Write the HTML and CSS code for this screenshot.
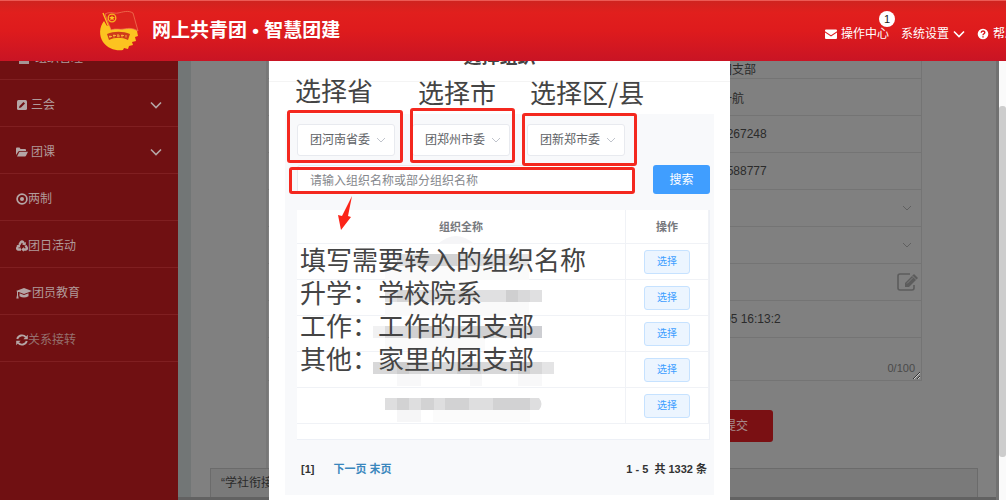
FILE: index.html
```html
<!DOCTYPE html>
<html lang="zh-CN">
<head>
  <meta charset="utf-8">
  <title>网上共青团 • 智慧团建</title>
  <link rel="stylesheet" href="styles.css">
</head>
<body>
  <header class="topbar">
    <a class="brand" href="#">
      <svg class="brand-logo" viewBox="0 0 40 42" aria-hidden="true">
        <path d="M5 11C0 17 0 26 4 32c5 7 13 9 20 8l1-2 4 1 1-3 4-1-1-3 4-1-1-4 3-1-1-5-2-5-28 0z" fill="#fcc320"/>
        <path d="M6 4c6-3 9 0 13-1 5-1 10-3 15 0l5 18c-5-3-9-3-14-2-5 1-8-1-13 1z" fill="#dc231e" stroke="#f0805a" stroke-width="0.7"/>
        <path d="M4 3l7 17" stroke="#fcc320" stroke-width="1.300"/>
        <circle cx="13" cy="8" r="3.800" fill="none" stroke="#f8b420" stroke-width="1.300"/>
        <path d="M13 5.200l.8 1.900h2l-1.500 1.300.5 2-1.800-1.100-1.800 1.100.5-2-1.500-1.300h2z" fill="#fcc320"/>
        <path d="M8 24c7-3 16-3 23 0l-2 6c-6-3-13-3-19 0z" fill="#cf3a1a"/>
        <path d="M11 25.500v2.500m-1-1.500h3m2-2v3m-1-2h3m2-1.500v3m-1-1h3m2-1.500v3m-1-2h3m2-.5v2.500" stroke="#fcb83a" stroke-width="0.900" fill="none"/>
      </svg>
      <span>网上共青团 • 智慧团建</span>
    </a>
    <nav class="topnav">
      <a class="topnav-link topnav-mail" href="#">
        <svg class="ico" viewBox="0 0 12 12"><path d="M0 2.500Q0 1.500 1 1.500h10q1 0 1 1v.7L6 7.200 0 3.200zM0 4.500l6 4 6-4v5.500q0 1-1 1H1q-1 0-1-1z" fill="#fff"/></svg>
        操作中心
        <span class="badge">1</span>
      </a>
      <a class="topnav-link" href="#">
        系统设置
        <svg class="ico" viewBox="0 0 12 12"><path d="M1 3.500l5 5 5-5" fill="none" stroke="#fff" stroke-width="1.600"/></svg>
      </a>
      <a class="topnav-link" href="#">
        <svg class="ico" viewBox="0 0 12 12"><circle cx="6" cy="6" r="5.300" fill="#fff"/><path d="M4.200 4.700C4.200 2.400 7.800 2.400 7.800 4.600 7.800 5.800 6 5.800 6 7.200M6 8.200v1.300" fill="none" stroke="#d8181d" stroke-width="1.400"/></svg>
        帮助
      </a>
    </nav>
  </header>

  <div class="layout">
    <nav class="sidebar">
      <a class="side-item" href="#">
        <svg class="side-icon side-icon-wide" viewBox="0 0 16 12"><path d="M3 2h10v10H3z" fill="#a59595"/></svg>
        <span class="side-text">组织管理</span>
      </a>
      <a class="side-item" href="#">
        <svg class="side-icon" viewBox="0 0 12 12"><rect x="1" y="1" width="10" height="10" rx="1.500" fill="#b5a6a6"/><path d="M3 9l.5-2L7.500 3 9 4.500 5 8.500z" fill="#701012"/></svg>
        <span class="side-text">三会</span>
        <svg class="side-arrow" viewBox="0 0 12 12"><path d="M1 3.500l5 5 5-5"/></svg>
      </a>
      <a class="side-item" href="#">
        <svg class="side-icon" viewBox="0 0 12 12"><path d="M0 9V2.500Q0 1.500 1 1.500h2.500l1 1.500H9q1 0 1 1v1H3.500Q2.500 5 2 6zM1 10.500L3 6.500q.3-.7 1-.7h8l-2 4q-.3.700-1 .7z" fill="#b5a6a6"/></svg>
        <span class="side-text">团课</span>
        <svg class="side-arrow" viewBox="0 0 12 12"><path d="M1 3.500l5 5 5-5"/></svg>
      </a>
      <a class="side-item side-plain" href="#">
        <svg class="side-icon" viewBox="0 0 12 12"><circle cx="6" cy="6" r="4.900" fill="none" stroke="#b5a6a6" stroke-width="1.700"/><circle cx="6" cy="6" r="2" fill="#b5a6a6"/></svg>
        <span class="side-text">两制</span>
      </a>
      <a class="side-item side-plain" href="#">
        <svg class="side-icon" viewBox="0 0 12 12"><g fill="none" stroke="#b5a6a6" stroke-width="2.300"><path d="M3.300 4.800L5 2q1-1.300 2 0l1 1.800"/><path d="M9.500 5.500l1.200 2q.7 1.800-1 2H7"/><path d="M5 9.500H2.200q-1.600-.3-.8-2l1-1.600"/></g><path d="M6 4.600l3.600.9L10 2zM7.800 7v4.800L5.200 9.500zM.4 5.500l3.400-.9.600 3.400z" fill="#b5a6a6"/></svg>
        <span class="side-text">团日活动</span>
      </a>
      <a class="side-item side-plain" href="#">
        <svg class="side-icon side-icon-wide" viewBox="0 0 16 12"><path d="M8 1l8 3-8 3-8-3zM3.500 6.200L8 8l4.500-1.800v3Q8 12 3.500 9.200zM1 4.500h1V8l.7 3.500H.3L1 8z" fill="#b5a6a6"/></svg>
        <span class="side-text">团员教育</span>
      </a>
      <a class="side-item side-plain side-active" href="#">
        <svg class="side-icon" viewBox="0 0 12 12"><g fill="none" stroke="#b5a6a6" stroke-width="1.900"><path d="M1.200 5A5 5 0 0 1 9.800 3.200"/><path d="M10.800 7A5 5 0 0 1 2.200 8.800"/></g><path d="M11.800.800v4.400H7.400zM.2 11.200V6.800h4.400z" fill="#b5a6a6"/></svg>
        <span class="side-text">关系接转</span>
      </a>
    </nav>

    <main class="content">
      <form class="transfer-form">
        <div class="field field-org"><input type="text" value="团支部" aria-label="团支部"></div>
        <div class="field"><input type="text" value="一航" aria-label="姓名"></div>
        <div class="field"><input type="text" value="0267248" aria-label="证件号"></div>
        <div class="field"><input type="text" value="0588777" aria-label="手机号"></div>
        <div class="field">
          <select aria-label="转接原因"><option></option></select>
          <svg class="field-icon" viewBox="0 0 12 12"><path d="M2 4l4 4 4-4"/></svg>
        </div>
        <div class="field">
          <select aria-label="转出类型"><option></option></select>
          <svg class="field-icon" viewBox="0 0 12 12"><path d="M2 4l4 4 4-4"/></svg>
        </div>
        <div class="field">
          <input type="text" aria-label="转入组织">
          <svg class="field-edit" viewBox="0 0 24 20"><path d="M14 2H4Q2 2 2 4v12q0 2 2 2h12q2 0 2-2v-3" fill="none" stroke="#5c5c5c" stroke-width="1.600"/><path d="M9 11L18 2l4 4-9 9H9z" fill="#5c5c5c"/><path d="M16.500 4l4 4M11 11.500l6-6" stroke="#808080" stroke-width="0.900"/></svg>
        </div>
        <div class="field"><input type="text" value="-05 16:13:2" aria-label="时间"></div>
        <div class="field field-note">
          <textarea aria-label="备注"></textarea>
          <span class="counter">0/100</span>
        </div>
        <button class="submit" type="button">提交</button>
      </form>
      <div class="notice">“学社衔接</div>
      <div class="hscroll"></div>
    </main>
    <div class="vscroll"><div class="vscroll-thumb"></div></div>
  </div>

  <div class="dialog-layer">
    <section class="dialog" role="dialog" aria-label="选择组织">
      <h2 class="dialog-title">选择组织</h2>
      <div class="dialog-body">
        <div class="org-selects">
          <label class="org-select">
            <select aria-label="省"><option>团河南省委</option></select>
            <svg viewBox="0 0 12 12"><path d="M2 4l4 4 4-4"/></svg>
          </label>
          <label class="org-select">
            <select aria-label="市"><option>团郑州市委</option></select>
            <svg viewBox="0 0 12 12"><path d="M2 4l4 4 4-4"/></svg>
          </label>
          <label class="org-select">
            <select aria-label="区/县"><option>团新郑市委</option></select>
            <svg viewBox="0 0 12 12"><path d="M2 4l4 4 4-4"/></svg>
          </label>
        </div>
        <div class="search-row">
          <input type="text" placeholder="请输入组织名称或部分组织名称" aria-label="组织名称">
          <button type="button">搜索</button>
        </div>
        <div class="table-box">
          <table class="org-table">
            <thead>
              <tr><th scope="col">组织全称</th><th scope="col" class="col-action">操作</th></tr>
            </thead>
            <tbody>
              <tr>
                <td><svg class="mosaic" viewBox="0 0 182 36"><path d="M65 0q18-16 36 0z" fill="#f5f5f7"/><path d="M24 10h24v12H24z" fill="#dededf"/><path d="M48 10h36v12H48z" fill="#d2d2d3"/><path d="M84 10h48v12H84z" fill="#dededf"/><path d="M132 10h24v12h-24z" fill="#e4e4e5"/><path d="M12 22h144v14H12z" fill="#fafafa"/></svg></td>
                <td><button type="button">选择</button></td>
              </tr>
              <tr>
                <td><svg class="mosaic" viewBox="0 0 182 36"><path d="M12 10h157v12H12z" fill="#e0e0e1"/><path d="M24 10h12v12H24zM72 10h24v12H72z" fill="#d6d6d7"/><path d="M133 10h12v12h-12z" fill="#cfcfd0"/><path d="M145 10h12v12h-12z" fill="#d9d9da"/><path d="M12 22h144v14H12z" fill="#fafafa"/></svg></td>
                <td><button type="button">选择</button></td>
              </tr>
              <tr>
                <td><svg class="mosaic" viewBox="0 0 182 36"><path d="M0 10h12v12H0z" fill="#f1f1f2"/><path d="M12 10h157v12H12z" fill="#dcdcdd"/><path d="M36 10h24v12H36zM97 10h24v12H97z" fill="#d0d0d1"/><path d="M157 10h12v12h-12z" fill="#cdced2"/><path d="M12 22h100v12H12z" fill="#fafafa"/></svg></td>
                <td><button type="button">选择</button></td>
              </tr>
              <tr>
                <td><svg class="mosaic" viewBox="0 0 182 36"><path d="M0 10h181v12H0z" fill="#d8d8d9"/><path d="M24 10h12v12H24zM84 10h24v12H84zM145 10h12v12h-12z" fill="#cdcdce"/><path d="M169 10h12v12h-12z" fill="#e4e4e5"/><path d="M24 22h24v12H24zM97 22h12v12H97zM145 22h24v12h-24z" fill="#f8f8f9"/></svg></td>
                <td><button type="button">选择</button></td>
              </tr>
              <tr>
                <td><svg class="mosaic" viewBox="0 0 182 36"><path d="M12 10h154q5 6 0 12H12z" fill="#dededf"/><path d="M24 10h12v12H24zM48 10h13v12H48zM72 10h24v12H72zM120 10h37v12h-37z" fill="#d2d2d3"/><path d="M24 22h24v12H24z" fill="#f6f6f7"/><path d="M60 22h97v12H60z" fill="#fbfbfb"/></svg></td>
                <td><button type="button">选择</button></td>
              </tr>
            </tbody>
          </table>
        </div>
        <div class="pager">
          <span>[1]</span>
          <span class="pager-links"><a href="#">下一页</a> <a href="#">末页</a></span>
          <span class="pager-total">1 - 5&nbsp; 共 1332 条</span>
        </div>
      </div>

      <!-- 操作说明标注 -->
      <div class="mark mark-province"></div>
      <div class="mark mark-city"></div>
      <div class="mark mark-county"></div>
      <div class="mark mark-name"></div>
      <svg class="arrow" viewBox="0 0 16 36"><path d="M14 1L10 21l3 1L3 35 0 20l4 1z" fill="#fb2418"/></svg>
      <p class="tip tip-province">选择省</p>
      <p class="tip tip-city">选择市</p>
      <p class="tip tip-county">选择区/县</p>
      <p class="tip tip-name">填写需要转入的组织名称<br>升学：学校院系<br>工作：工作的团支部<br>其他：家里的团支部</p>
    </section>
  </div>
</body>
</html>
```
FILE: styles.css
```css
* {
  box-sizing: border-box;
}
body {
  margin: 0;
  height: 100vh;
  display: flex;
  flex-direction: column;
  position: relative;
  overflow: hidden;
  background: #808080;
  color: #333;
  font: 12px/16px "Liberation Sans", "Noto Sans CJK SC", sans-serif;
}
a {
  color: inherit;
  text-decoration: none;
}
button, input, select, textarea {
  font: inherit;
  color: inherit;
  margin: 0;
}
select {
  appearance: none;
}

/* header */
.topbar {
  position: relative;
  z-index: 3;
  flex: none;
  height: 61px;
  display: flex;
  align-items: center;
  justify-content: space-between;
  padding-left: 99px;
  border-top: 1px solid #ec5a55;
  background: linear-gradient(#cf2420, #e11f1d 20%, #de1b1d 50%, #c91424);
  color: #fff;
}
.brand {
  display: flex;
  align-items: center;
  gap: 13px;
  font-size: 19px;
  line-height: 28px;
  font-weight: bold;
  white-space: nowrap;
}
.brand-logo {
  width: 40px;
  height: 42px;
}
.topnav {
  display: flex;
  align-items: center;
  gap: 12px;
  width: 181px;
  padding-top: 6px;
  white-space: nowrap;
}
.topnav-link {
  position: relative;
  flex: none;
  display: flex;
  align-items: center;
  gap: 4px;
}
.badge {
  position: absolute;
  right: -6px;
  top: -15px;
  width: 16px;
  height: 16px;
  border-radius: 50%;
  background: #fff;
  color: #222;
  font-size: 11px;
  text-align: center;
}
.ico {
  width: 12px;
  height: 12px;
}

/* page behind the dialog */
.layout {
  flex: 1;
  min-height: 0;
  display: flex;
  overflow: hidden;
}
.sidebar {
  flex: none;
  width: 178px;
  margin-top: -28px;
  background: #701012;
}
.side-item {
  display: flex;
  align-items: center;
  gap: 3px;
  height: 47px;
  padding: 3px 16px 0;
  border-bottom: 1px solid #801f21;
  color: #b09a9a;
}
.side-plain {
  gap: 0;
}
.side-active {
  color: #95706f;
}
.side-icon {
  width: 12px;
  height: 12px;
}
.side-icon-wide {
  width: 16px;
}
.side-text {
  flex: 1;
}
.side-arrow {
  width: 12px;
  height: 12px;
  fill: none;
  stroke: #b5a6a6;
  stroke-width: 1.6;
}
.content {
  flex: 1;
  min-width: 0;
  display: flex;
  flex-direction: column;
  border-left: 13px solid #727676;
  border-right: 3px solid #717171;
  background: #808080;
}
.transfer-form {
  margin: -19px 74px 0 75px;
  border-left: 2px solid #777;
}
.field {
  position: relative;
  height: 37px;
  border: 1px solid #747474;
  border-width: 0 1px 1px 0;
}
.field input, .field select, .field textarea {
  display: block;
  width: 100%;
  height: 100%;
  padding: 0 0 0 452px;
  border: 0;
  background: none;
  color: #2b2b2b;
}
.field.field-org input {
  padding-top: 16px;
}
.field-icon {
  position: absolute;
  right: 8px;
  top: 12px;
  width: 12px;
  height: 12px;
  fill: none;
  stroke: #606060;
}
.field-edit {
  position: absolute;
  right: 1px;
  top: 8px;
  width: 24px;
  height: 20px;
}
.field.field-note {
  height: 43px;
}
.counter {
  position: absolute;
  right: 6px;
  bottom: 4px;
  font-size: 11px;
  color: #4a4a4a;
}
.submit {
  display: block;
  width: 74px;
  height: 32px;
  margin: 29px 0 26px 431px;
  border: 0;
  border-radius: 3px;
  background: #7a1013;
  color: #a58a8a;
}
.notice {
  flex: 1;
  margin: 0 18px 0 19px;
  padding: 6px 10px;
  border: 1px solid #6b6b6b;
  border-bottom: 0;
  background: #7a7a7a;
  color: #2b2b2b;
}
.hscroll {
  flex: none;
  height: 6px;
  margin-left: -13px;
  background: #626262;
}
.vscroll {
  flex: none;
  width: 7px;
  padding-top: 45px;
  background: #fafafa;
}
.vscroll-thumb {
  height: 89%;
  max-height: 351px;
  border-radius: 3px;
  background: #cdcdcd;
}

/* dialog */
.dialog-layer {
  position: absolute;
  inset: 0 7px 0 0;
  z-index: 2;
  display: flex;
  justify-content: center;
}
.dialog {
  position: relative;
  width: 461px;
  padding: 0 16px;
  background: #fff;
}
.dialog-title {
  margin: 0 -16px 32px;
  padding: 43px 0 10px;
  border-bottom: 1px solid #f4f4f4;
  color: #444;
  font-size: 18px;
  line-height: 28px;
  text-align: center;
}
.dialog-body {
  padding: 10px 4px 0 12px;
  height: 381px;
  background: #f8f9fb;
}
.org-selects {
  display: flex;
  gap: 17px;
}
.org-select {
  position: relative;
  width: 98px;
}
.org-select select {
  display: block;
  width: 100%;
  height: 32px;
  padding: 0 12px;
  border: 1px solid #e8eaef;
  border-radius: 3px;
  background: #fff;
  color: #606266;
}
.org-select svg {
  position: absolute;
  right: 8px;
  top: 10px;
  width: 12px;
  height: 12px;
  fill: none;
  stroke: #c0c4cc;
}
.search-row {
  display: flex;
  gap: 20px;
  margin: 9px 0 16px;
}
.search-row input {
  flex: 1;
  min-width: 0;
  height: 29px;
  padding: 2px 12px 0;
  border: 1px solid #e8eaef;
  border-radius: 3px;
  background: #fff;
}
.search-row input::placeholder {
  color: #85878c;
}
.search-row button {
  width: 57px;
  border: 0;
  border-radius: 3px;
  background: #409eff;
  color: #fff;
}
.table-box {
  padding-bottom: 15px;
  border: 1px solid #edf0f6;
  border-width: 0 1px 1px 0;
  background: #fff;
}
.org-table {
  width: 100%;
  table-layout: fixed;
  border-collapse: separate;
  border-spacing: 0;
}
.org-table th, .org-table td {
  height: 36px;
  padding: 0;
  border: 1px solid #f0f2f6;
  border-width: 0 1px 1px 0;
  text-align: center;
}
.org-table th {
  height: 34px;
  color: #77797d;
  font-size: 11px;
}
.org-table .col-action {
  width: 83px;
}
.org-table button {
  width: 46px;
  height: 24px;
  padding: 0;
  border: 1px solid #c6e2ff;
  border-radius: 3px;
  background: #ecf5ff;
  color: #409eff;
  font-size: 10px;
}
.mosaic {
  display: block;
  width: 182px;
  height: 36px;
  margin: 0 0 -1px 76px;
  overflow: visible;
}
.pager {
  display: flex;
  gap: 19px;
  padding: 21px 3px 21px 4px;
  font-size: 11px;
  font-weight: bold;
}
.pager-links {
  flex: 1;
  color: #3a87bd;
}

/* hand-drawn style marks over the dialog */
.mark {
  position: absolute;
  border: 3px solid #f4281f;
  border-radius: 3px;
}
.mark-province {
  left: 18px;
  top: 110px;
  width: 116px;
  height: 53px;
}
.mark-city {
  left: 141px;
  top: 108px;
  width: 105px;
  height: 55px;
}
.mark-county {
  left: 253px;
  top: 113px;
  width: 115px;
  height: 53px;
}
.mark-name {
  left: 20px;
  top: 167px;
  width: 346px;
  height: 27px;
}
.arrow {
  position: absolute;
  left: 69px;
  top: 195px;
  width: 16px;
  height: 36px;
}
.tip {
  position: absolute;
  margin: 0;
  color: #444;
  font-family: "Noto Sans CJK SC", sans-serif;
  font-size: 26px;
  line-height: 33px;
  white-space: nowrap;
}
.tip-province {
  left: 26px;
  top: 73px;
}
.tip-city {
  left: 149px;
  top: 75px;
}
.tip-county {
  left: 261px;
  top: 75px;
}
.tip-name {
  left: 31px;
  top: 242px;
}
```
